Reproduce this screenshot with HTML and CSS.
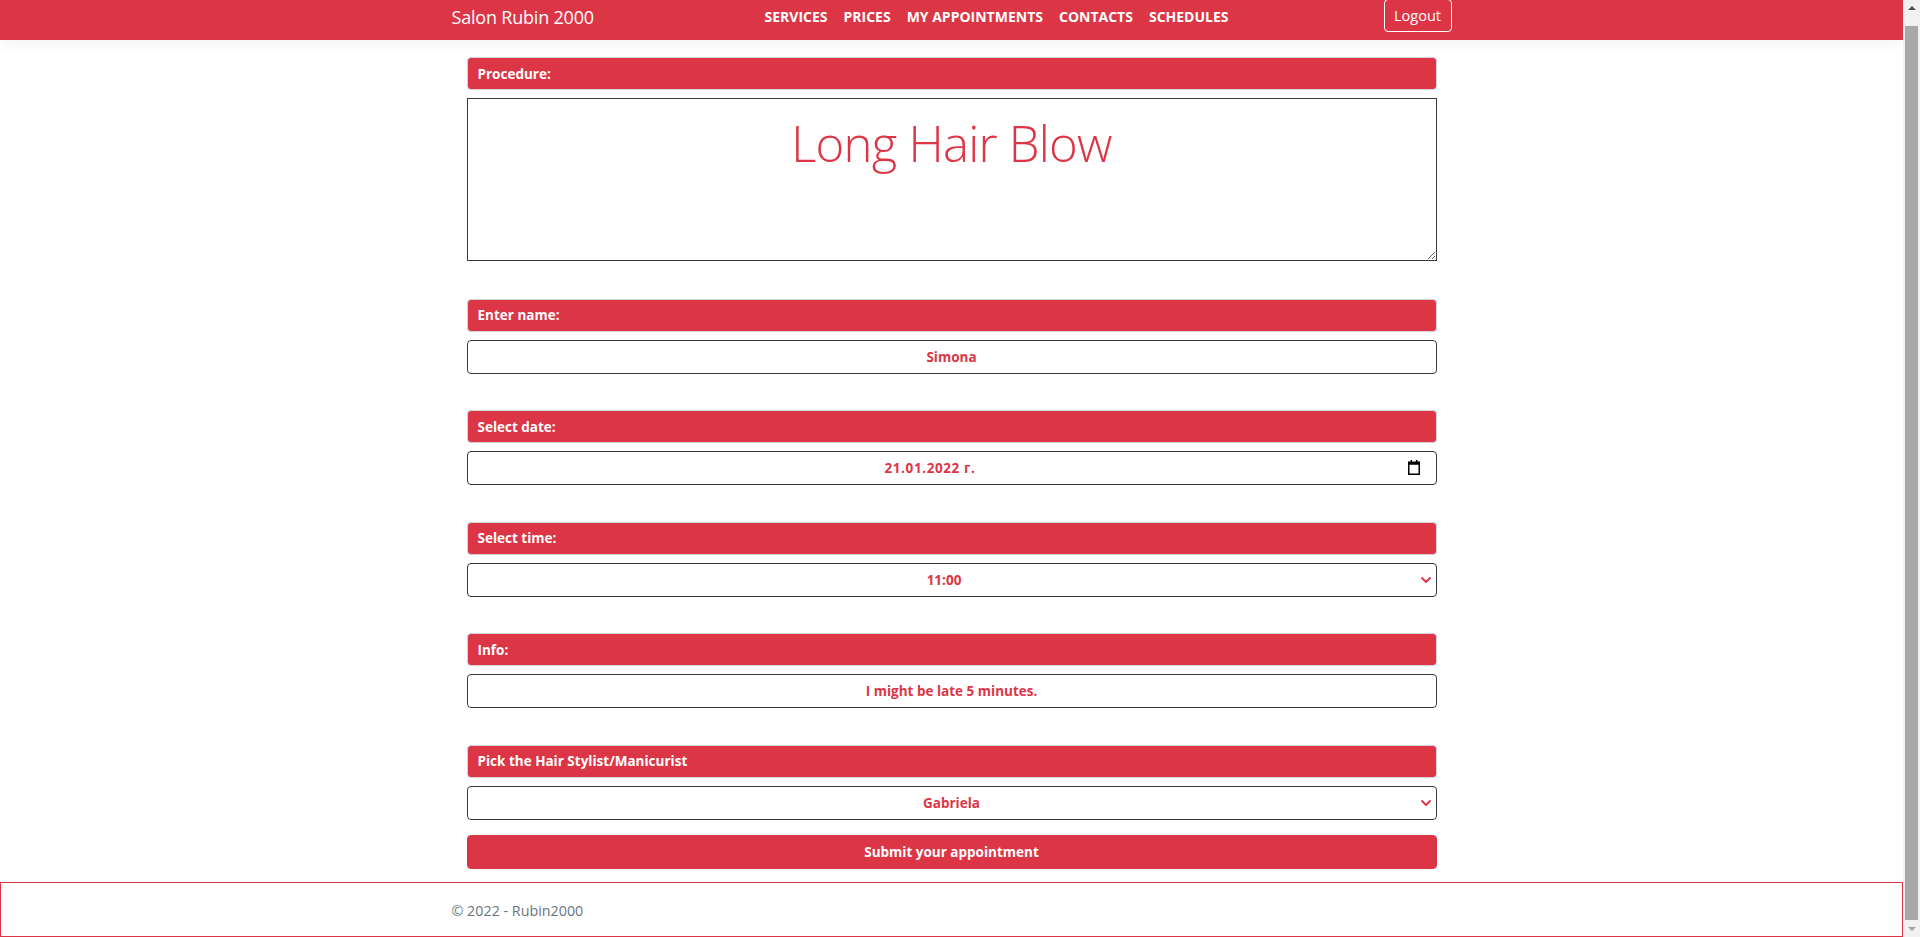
FILE: index.html
```html
<!DOCTYPE html>
<html lang="en">
<head>
<meta charset="utf-8">
<title>Salon Rubin 2000</title>
<link rel="stylesheet" href="styles.css">
</head>
<body>
<header class="navbar">
  <div class="nav-inner">
    <a class="brand" href="#">Salon Rubin 2000</a>
    <ul class="nav-links">
      <li><a href="#">SERVICES</a></li>
      <li><a href="#">PRICES</a></li>
      <li><a href="#">MY APPOINTMENTS</a></li>
      <li><a href="#">CONTACTS</a></li>
      <li><a href="#">SCHEDULES</a></li>
    </ul>
    <button class="logout" type="button">Logout</button>
  </div>
</header>
<main class="container">
  <form class="appt-form">
    <div class="field field-procedure">
      <div class="field-label">Procedure:</div>
      <textarea class="procedure" readonly>Long Hair Blow</textarea>
    </div>
    <div class="field">
      <div class="field-label">Enter name:</div>
      <input class="control" type="text" value="Simona" readonly>
    </div>
    <div class="field">
      <div class="field-label">Select date:</div>
      <div class="control-wrap">
        <input class="control control-date" type="text" value="21.01.2022 г." readonly>
        <svg class="cal-icon" width="12" height="15" viewBox="0 0 12 15" aria-hidden="true">
          <rect x="2.5" y="0" width="1.6" height="3" fill="#000"/>
          <rect x="7.9" y="0" width="1.6" height="3" fill="#000"/>
          <rect x="0.75" y="2.25" width="10.5" height="12" fill="none" stroke="#000" stroke-width="1.5"/>
          <rect x="0.75" y="2.25" width="10.5" height="2.5" fill="#000"/>
        </svg>
      </div>
    </div>
    <div class="field">
      <div class="field-label">Select time:</div>
      <div class="control-wrap">
        <select class="control select select-time"><option>11:00</option></select>
        <svg class="chevron" width="10" height="6" viewBox="0 0 10 6" aria-hidden="true"><path d="M1 1l4 4 4-4" fill="none" stroke="#dc3545" stroke-width="1.8" stroke-linecap="round" stroke-linejoin="round"/></svg>
      </div>
    </div>
    <div class="field">
      <div class="field-label">Info:</div>
      <input class="control" type="text" value="I might be late 5 minutes." readonly>
    </div>
    <div class="field field-last">
      <div class="field-label">Pick the Hair Stylist/Manicurist</div>
      <div class="control-wrap">
        <select class="control select"><option>Gabriela</option></select>
        <svg class="chevron" width="10" height="6" viewBox="0 0 10 6" aria-hidden="true"><path d="M1 1l4 4 4-4" fill="none" stroke="#dc3545" stroke-width="1.8" stroke-linecap="round" stroke-linejoin="round"/></svg>
      </div>
    </div>
    <button class="submit" type="button">Submit your appointment</button>
  </form>
</main>
<footer class="footer">
  <div class="footer-inner">&copy; 2022 - Rubin2000</div>
</footer>
<div class="scrollbar" aria-hidden="true">
  <span class="sb-btn sb-up"></span>
  <span class="sb-thumb"></span>
  <span class="sb-btn sb-down"></span>
</div>
</body>
</html>
```
FILE: styles.css
```css
* { box-sizing: border-box; }

html, body {
  margin: 0;
  padding: 0;
}

body {
  margin-right: 17px;
  font-family: "Open Sans", "Liberation Sans", sans-serif;
  font-size: 16px;
  color: #212529;
  background: #fff;
  overflow: hidden;
}

.navbar {
  background: #dc3545;
  height: 40px;
  box-shadow: 0 4px 12px rgba(0, 0, 0, 0.05);
  position: relative;
  z-index: 1;
}

.nav-inner {
  max-width: 1000px;
  margin: 0 auto;
  height: 32px;
  display: flex;
  align-items: center;
}

.brand {
  flex: 0 0 313px;
  color: #fff;
  text-decoration: none;
  font-size: 18px;
  font-weight: 500;
  letter-spacing: -0.2px;
  margin-top: 1px;
}

.nav-links {
  list-style: none;
  margin: 0;
  padding: 0;
  display: flex;
  gap: 16px;
}

.nav-links a {
  color: #fff;
  text-decoration: none;
  font-weight: 700;
  font-size: 14px;
  letter-spacing: 0;
}

.logout {
  margin-left: auto;
  height: 33px;
  width: 68px;
  margin-top: -1px;
  background: transparent;
  color: #fff;
  border: 1px solid #fff;
  border-radius: 4px;
  font-family: inherit;
  font-size: 14.5px;
  padding: 0;
}

.container {
  max-width: 1000px;
  margin: 17px auto 0;
  padding: 0 15px;
}

.field {
  margin-bottom: 36.5px;
}

.field-procedure {
  margin-bottom: 37.7px;
}

.field-last {
  margin-bottom: 15px;
}

.field-label {
  height: 33px;
  background: #dc3545;
  border: 1px solid #d2d4d6;
  border-radius: 4px;
  color: #fff;
  font-weight: 700;
  font-size: 13.5px;
  padding: 0 10px;
  display: flex;
  align-items: center;
  margin-bottom: 8px;
}

.procedure {
  display: block;
  width: 100%;
  height: 163px;
  border: 1px solid #343a40;
  border-radius: 0;
  padding: 15px 12px 6px;
  font-family: "Open Sans", "Liberation Sans", sans-serif;
  font-weight: 300;
  font-size: 49px;
  letter-spacing: -0.75px;
  line-height: 1.2;
  color: #dc3545;
  text-align: center;
  resize: vertical;
  outline: none;
  background: #fff;
  overflow: hidden;
}

.control-wrap {
  position: relative;
}

.control {
  display: block;
  width: 100%;
  height: 34px;
  border: 1px solid #343a40;
  border-radius: 4px;
  background: #fff;
  color: #dc3545;
  font-family: "Open Sans", "Liberation Sans", sans-serif;
  font-weight: 700;
  font-size: 13.5px;
  text-align: center;
  text-align-last: center;
  padding: 0 12px;
  outline: none;
}

.control-date {
  padding-right: 55px;
  letter-spacing: 0.6px;
}

.select {
  appearance: none;
  -webkit-appearance: none;
}

.select-time {
  padding-right: 27px;
}

.cal-icon {
  position: absolute;
  right: 17px;
  top: 9px;
}

.chevron {
  position: absolute;
  right: 6px;
  top: 14px;
}

.submit {
  display: block;
  width: 100%;
  height: 34px;
  background: #dc3545;
  border: 1px solid #dc3545;
  border-radius: 4px;
  color: #fff;
  font-family: "Open Sans", "Liberation Sans", sans-serif;
  font-weight: 700;
  font-size: 13.5px;
  padding: 0;
}

.footer {
  margin-top: 13px;
  border: 1px solid #dc3545;
  height: 55px;
}

.footer-inner {
  max-width: 1000px;
  margin: 0 auto;
  line-height: 55px;
  color: #6c757d;
  font-size: 14.3px;
}

.scrollbar {
  position: fixed;
  top: 0;
  right: 0;
  width: 17px;
  height: 100%;
  background: #f1f1f1;
  display: flex;
  flex-direction: column;
  z-index: 5;
}

.sb-btn {
  flex: 0 0 17px;
  position: relative;
}

.sb-btn::after {
  content: "";
  position: absolute;
  left: 4.5px;
  width: 0;
  height: 0;
  border-left: 4px solid transparent;
  border-right: 4px solid transparent;
}

.sb-up::after {
  top: 6px;
  border-bottom: 4px solid #505050;
}

.sb-down::after {
  top: 7px;
  border-top: 4px solid #a3a3a3;
}

.sb-thumb {
  flex: 1;
  margin: 9px 2px 0;
  background: #a8a8a8;
}
```
